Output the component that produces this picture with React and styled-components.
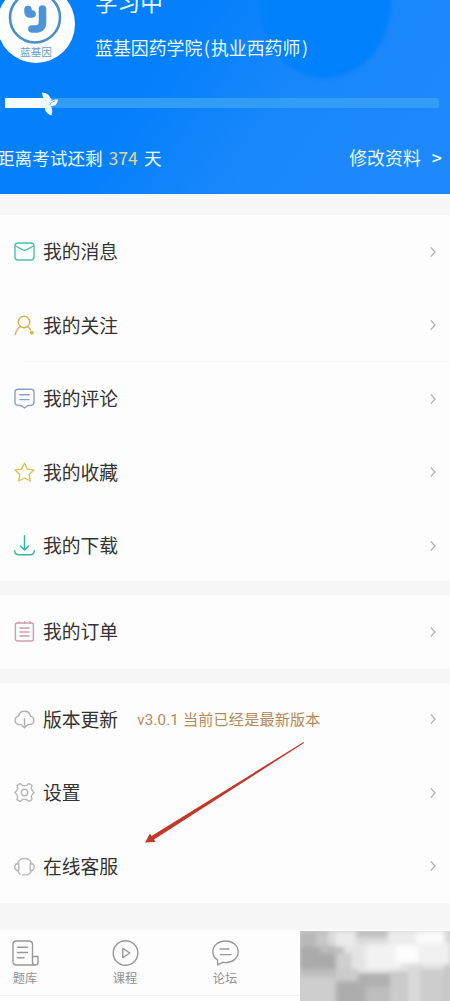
import React from "react";
import styled, { createGlobalStyle } from "styled-components";

const GlobalStyle = createGlobalStyle`
    * {
        box-sizing: border-box;
    }
    body {
        margin: 0;
        background: #f7f7f7;
        font-family: "Noto Sans CJK SC", sans-serif;
    }
`;

const strokeProps = {
    fill: "none",
    strokeWidth: 1.4,
    strokeLinecap: "round",
    strokeLinejoin: "round",
};

const icons = {
    message: (
        <>
            <rect x="1" y="2" width="19" height="17" rx="3" />
            <path d="M1.5 5 L8.8 8.8 Q10.5 9.6 12.2 8.8 L19.5 5" />
        </>
    ),
    follow: (
        <>
            <circle cx="10" cy="7" r="5.8" />
            <path d="M1.2 19.6 Q2 15 6.2 11.8 M13.8 11.8 L16.6 14.4" />
            <circle cx="17.8" cy="17.8" r="1.3" fill="#d9b34a" />
        </>
    ),
    comment: (
        <>
            <path d="M4 1.2 H17 Q20 1.2 20 4.2 V14.4 Q20 16.8 17.4 17.2 L13.5 17.8 L10.5 20 L7.5 17.8 L3.6 17.2 Q1 16.8 1 14.4 V4.2 Q1 1.2 4 1.2 Z" />
            <path d="M5.8 6.8 H15.2 M5.8 11.6 H15.2" />
        </>
    ),
    favorite: (
        <path d="M10.5 1.2 L13.4 7.1 L19.9 8 L15.2 12.6 L16.3 19 L10.5 16 L4.7 19 L5.8 12.6 L1.1 8 L7.6 7.1 Z" />
    ),
    download: (
        <path d="M10.5 0.8 V14.8 M6.4 11 L10.5 15 L14.6 11 M0.8 15.8 Q0.8 19.8 4.6 19.8 H16.4 Q20.2 19.8 20.2 15.8" />
    ),
    order: (
        <>
            <rect x="1.4" y="2" width="18" height="18" rx="2" />
            <path d="M5 0.8 V2 M10.5 0.8 V2 M16 0.8 V2 M6 7 H15 M6 11 H15 M6 15 H15" />
        </>
    ),
    update: (
        <>
            <path d="M7.4 15.6 H5 A4.3 4.3 0 0 1 4.6 7.1 A6 6 0 0 1 16.4 7.1 A4.3 4.3 0 0 1 16 15.6 H13.6" />
            <path d="M10.5 9.8 V18.6 M8 16.4 L10.5 18.8 L13 16.4" />
        </>
    ),
    settings: (
        <>
            <path d="M6.2 1.6 L8.4 3.6 H12.6 L14.8 1.6 L18 3.4 L17.2 6.6 L18.6 9 L20.2 10.5 L18.6 12 L17.2 14.4 L18 17.6 L14.8 19.4 L12.6 17.4 H8.4 L6.2 19.4 L3 17.6 L3.8 14.4 L2.4 12 L0.8 10.5 L2.4 9 L3.8 6.6 L3 3.4 Z" />
            <circle cx="10.5" cy="10.5" r="3.2" />
        </>
    ),
    service: (
        <>
            <path d="M3.4 7.8 A7.4 7.4 0 0 1 17.6 7.8" />
            <path d="M4.8 7.8 H3.4 Q0.8 7.8 0.8 11 Q0.8 14.6 4.8 14.8 Z M16.2 7.8 H17.6 Q20.2 7.8 20.2 11 Q20.2 14.6 16.2 14.8 Z" />
            <path d="M17.2 14.8 Q16.4 18.2 12.6 18.8 M8.6 18.9 H12.2 M3.8 14.8 Q4.6 17 6 18" />
        </>
    ),
};

const groups = [
    [
        { label: "我的消息", icon: "message", color: "#43c5aa" },
        { label: "我的关注", icon: "follow", color: "#d9b34a", divider: true },
        { label: "我的评论", icon: "comment", color: "#8ba0c8" },
        { label: "我的收藏", icon: "favorite", color: "#dfc057" },
        { label: "我的下载", icon: "download", color: "#2fb9a0" },
    ],
    [{ label: "我的订单", icon: "order", color: "#cb9dab" }],
    [
        {
            label: "版本更新",
            icon: "update",
            color: "#b0b0b0",
            note: "v3.0.1 当前已经是最新版本",
        },
        { label: "设置", icon: "settings", color: "#b8b8b8" },
        { label: "在线客服", icon: "service", color: "#bababa" },
    ],
];

const tabs = [
    {
        label: "题库",
        icon: (
            <>
                <path d="M20.5 16.5 V4.5 Q20.5 1 17 1 H4.5 Q1 1 1 4.5 V21.5 Q1 25 4.5 25 H23.5 Q26 25 26 22.5 V16.5 H20.5 V22.5 Q20.5 25 23 25" />
                <path d="M5.5 7.3 H15.5 M5.5 12.5 H15.5 M5.5 17.7 H12" />
            </>
        ),
    },
    {
        label: "课程",
        icon: (
            <>
                <circle cx="13.5" cy="13" r="12.3" />
                <path d="M10.8 8.4 L17.8 13 L10.8 17.6 Z" />
            </>
        ),
    },
    {
        label: "论坛",
        icon: (
            <>
                <path d="M5.5 20 Q0.8 17 0.8 11.8 C0.8 5.5 6.5 1 13.5 1 C20.5 1 26.2 5.5 26.2 11.8 C26.2 18.2 20.5 22.6 13.5 22.6 Q11.8 22.6 10.5 22.3 L5.8 24.8 Z" />
                <path d="M8 9 H17 M8.5 14.6 H19" />
            </>
        ),
    },
];

// x, y, width, height, fill
const mosaic = [
    [0, 0, 150, 70, "#e4e4e4"],
    [0, 0, 28, 18, "#b8b8b8"],
    [16, 2, 12, 14, "#c8c8c8"],
    [0, 16, 36, 24, "#aaaaaa"],
    [28, 0, 8, 16, "#dcdcdc"],
    [20, 14, 24, 8, "#bdbdbd"],
    [36, 0, 22, 16, "#ebebeb"],
    [56, 0, 32, 6, "#c0c0c0"],
    [56, 6, 32, 7, "#dadada"],
    [88, 0, 28, 14, "#ececec"],
    [116, 0, 28, 12, "#fafafa"],
    [144, 0, 6, 14, "#dcdcdc"],
    [36, 22, 16, 16, "#cfcfcf"],
    [52, 14, 14, 22, "#e4e4e4"],
    [66, 13, 34, 25, "#f2f2f2"],
    [96, 14, 22, 18, "#fdfdfd"],
    [118, 12, 32, 20, "#f1f1f1"],
    [0, 38, 36, 10, "#bdbdbd"],
    [0, 46, 36, 24, "#cecece"],
    [36, 38, 22, 12, "#cccccc"],
    [36, 50, 30, 24, "#adadad"],
    [58, 42, 34, 16, "#b0b0b0"],
    [66, 56, 24, 18, "#bebebe"],
    [90, 40, 18, 34, "#cbcbcb"],
    [108, 34, 14, 40, "#dadada"],
    [120, 38, 24, 36, "#cdcdcd"],
    [144, 34, 6, 40, "#c6c6c6"],
];

function Chevron() {
    return (
        <ChevronIcon viewBox="0 0 8 12">
            <path d="M1.8 1.4 L6 6 L1.8 10.6" />
        </ChevronIcon>
    );
}

function Profile() {
    return (
        <Header>
            <HeaderShade viewBox="0 0 450 194" preserveAspectRatio="none">
                <defs>
                    <filter id="edge">
                        <feGaussianBlur stdDeviation="2" />
                    </filter>
                </defs>
                <ellipse
                    cx="325"
                    cy="2"
                    rx="66"
                    ry="76"
                    fill="#0381fc"
                    filter="url(#edge)"
                />
            </HeaderShade>
            <Identity>
                <Avatar>
                    <LogoIcon viewBox="0 0 56 56">
                        <circle cx="27" cy="28.5" r="25" />
                        <path
                            d="M20 20.5 V22.5 Q20 25 22.5 25 H24"
                            className="stem"
                        />
                        <path
                            d="M34.5 20 V33 Q34.5 40 27.5 40 H24"
                            className="stem"
                        />
                    </LogoIcon>
                    <AvatarText>蓝基因</AvatarText>
                </Avatar>
                <NameBlock>
                    <Status>学习中</Status>
                    <School>
                        蓝基因药学院<Paren>(</Paren>执业西药师<Paren>)</Paren>
                    </School>
                </NameBlock>
            </Identity>
            <Progress>
                <Filled />
                <Pinwheel viewBox="0 0 20 24">
                    <path d="M3 0.5 Q12 1 13 11 L8 10 Q3.5 7 3 0.5 Z" />
                    <path d="M19 7.5 Q18.5 15.5 9 14 Q11 6.5 19 7.5 Z" />
                    <path d="M12.5 23.5 Q4 21 6 12 L11 13 Q14.5 17 12.5 23.5 Z" />
                    <path d="M0 10 Q5 6 11 11 Q6 18 0 15 Z" />
                    <path
                        d="M10.5 13.5 Q11.5 9.5 16 9"
                        fill="none"
                        stroke="#6fb4e8"
                        strokeWidth="0.9"
                    />
                </Pinwheel>
            </Progress>
            <Countdown>
                <span>
                    距离考试还剩<Days>374</Days>天
                </span>
                <Edit>
                    修改资料<Arrow>&gt;</Arrow>
                </Edit>
            </Countdown>
        </Header>
    );
}

export default function App() {
    return (
        <>
            <GlobalStyle />
            <Page>
                <Profile />
                <Menu>
                    {groups.map((rows, i) => (
                        <Group key={i} $first={i === 0}>
                            {rows.map((row) => (
                                <Row key={row.label} $divider={row.divider}>
                                    <RowIcon
                                        viewBox="0 0 21 21"
                                        stroke={row.color}
                                        {...strokeProps}
                                    >
                                        {icons[row.icon]}
                                    </RowIcon>
                                    <Label>{row.label}</Label>
                                    {row.note && <Note>{row.note}</Note>}
                                    <Chevron />
                                </Row>
                            ))}
                        </Group>
                    ))}
                </Menu>
                <TabBar>
                    {tabs.map((tab) => (
                        <Tab key={tab.label}>
                            <TabIcon
                                viewBox="0 0 27 26"
                                stroke="#999999"
                                {...strokeProps}
                            >
                                {tab.icon}
                            </TabIcon>
                            {tab.label}
                        </Tab>
                    ))}
                    <Mosaic viewBox="0 0 150 70">
                        <defs>
                            <filter id="soften">
                                <feGaussianBlur stdDeviation="2" />
                            </filter>
                        </defs>
                        <rect width="150" height="70" fill="#d0d0d0" />
                        <g filter="url(#soften)">
                            {mosaic.map(([x, y, width, height, fill], i) => (
                                <rect
                                    key={i}
                                    {...{ x, y, width, height, fill }}
                                />
                            ))}
                        </g>
                    </Mosaic>
                </TabBar>
                <Pointer viewBox="0 0 162 104">
                    <path d="M160.5 1 L161 2 L11 98.5 L12.5 101 L2 101.5 L7 92.5 L8.5 95 Z" />
                </Pointer>
            </Page>
        </>
    );
}

// --- STYLES ---

const Page = styled.div`
    position: relative;
    width: 450px;
    height: 1001px;
    overflow: hidden;
    display: flex;
    flex-direction: column;
`;

const Header = styled.header`
    position: relative;
    height: 194px;
    flex-shrink: 0;
    overflow: hidden;
    background: linear-gradient(
        125deg,
        #0480fb 0%,
        #0480fb 35%,
        #1a87fb 62%,
        #1e89fb 100%
    );
    color: #e9f8ff;
`;

const HeaderShade = styled.svg`
    position: absolute;
    inset: 0;
    width: 100%;
    height: 100%;
`;

const Identity = styled.div`
    position: relative;
    display: flex;
    height: 98px;
`;

const Avatar = styled.div`
    width: 78px;
    height: 78px;
    margin: -15px 0 0 -3px;
    flex-shrink: 0;
    border-radius: 50%;
    background: #fcfeff;
    display: flex;
    flex-direction: column;
    align-items: center;
`;

const LogoIcon = styled.svg`
    width: 56px;
    height: 56px;
    margin-top: 4px;
    fill: none;
    stroke: #4b8fc4;
    stroke-width: 2.6;
    .stem {
        stroke: #4c94d6;
        stroke-width: 7.6;
        stroke-linecap: round;
    }
`;

const AvatarText = styled.span`
    font-size: 10.7px;
    line-height: 12px;
    margin-top: 1px;
    color: #6d9fca;
`;

const NameBlock = styled.div`
    margin: -13px 0 0 20px;
`;

const Status = styled.div`
    font-size: 22.6px;
    line-height: 30px;
`;

const School = styled.div`
    font-size: 17.9px;
    line-height: 26px;
    margin-top: 17px;
    white-space: nowrap;
`;

const Paren = styled.span`
    margin: 0 1px 0 1.5px;
`;

const Progress = styled.div`
    position: relative;
    height: 10px;
    width: 434px;
    margin-left: 5px;
    border-radius: 2px;
    background: #329df7;
`;

const Filled = styled.div`
    width: 40px;
    height: 100%;
    background: #f5fcff;
`;

const Pinwheel = styled.svg`
    position: absolute;
    left: 34px;
    top: -6px;
    width: 20px;
    height: 24px;
    fill: #ecfaff;
`;

const Countdown = styled.div`
    position: relative;
    display: flex;
    justify-content: space-between;
    margin: 36px 8px 0 -3px;
    font-size: 17.6px;
    line-height: 27px;
    white-space: nowrap;
`;

const Days = styled.span`
    margin: 0 6px 0 6px;
    color: #e3d68a;
`;

const Edit = styled.span`
    font-size: 17.9px;
`;

const Arrow = styled.span`
    margin-left: 11px;
    font-weight: 500;
`;

const Menu = styled.main`
    display: flex;
    flex-direction: column;
    gap: 14px;
    padding-top: 21px;
    height: 736px;
    flex-shrink: 0;
`;

const Group = styled.section`
    height: ${(p) => (p.$first ? "366px" : "auto")};
    background: #fdfdfd;
`;

const Row = styled.div`
    display: flex;
    align-items: center;
    height: 73.5px;
    padding: 0 13px 0 14px;
    background: ${(p) =>
        p.$divider
            ? "linear-gradient(#f6f6f6, #f6f6f6) 24px 100% / 100% 1px no-repeat"
            : "none"};
`;

const RowIcon = styled.svg`
    width: 21px;
    height: 21px;
    margin-right: 8px;
    flex-shrink: 0;
    overflow: visible;
`;

const Label = styled.span`
    font-size: 18.8px;
    line-height: 28px;
    padding-bottom: 1px;
    color: #333333;
`;

const Note = styled.span`
    margin-left: 19px;
    padding-bottom: 2px;
    font-family: Roboto, "Noto Sans CJK SC", sans-serif;
    font-size: 15.1px;
    letter-spacing: 0.2px;
    color: #b38a5a;
`;

const ChevronIcon = styled.svg`
    width: 8px;
    height: 12px;
    margin-left: auto;
    fill: none;
    stroke: #b0b0b0;
    stroke-width: 1.3;
`;

const TabBar = styled.nav`
    position: relative;
    display: flex;
    height: 66px;
    flex-shrink: 0;
    background: #fdfdfd;
    border-bottom: 1px solid #f1f1f1;
    box-shadow: 0 6px 0 #fdfdfd;
`;

const Tab = styled.div`
    width: 100px;
    padding-top: 10px;
    display: flex;
    flex-direction: column;
    align-items: center;
    font-size: 12.3px;
    line-height: 18px;
    color: #929292;
    &:first-child {
        margin-left: -25px;
    }
`;

const TabIcon = styled.svg`
    width: 27px;
    height: 26px;
    margin-bottom: 3px;
`;

const Mosaic = styled.svg`
    position: absolute;
    right: 0;
    top: 1px;
    width: 150px;
    height: 70px;
`;

const Pointer = styled.svg`
    position: absolute;
    left: 143px;
    top: 741px;
    width: 162px;
    height: 104px;
    fill: #c0392b;
`;
